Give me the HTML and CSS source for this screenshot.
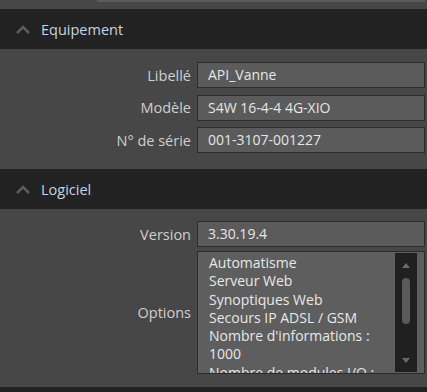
FILE: index.html
```html
<!DOCTYPE html>
<html lang="fr">
<head>
<meta charset="utf-8">
<link rel="stylesheet" href="styles.css">
</head>
<body>
<div class="remnant"><div class="remnant-box"></div></div>

<div class="section-header">
  <svg class="chevron" width="14" height="9" viewBox="0 0 14 9"><path d="M1 8 L7 2 L13 8" fill="none" stroke="#5c5c5c" stroke-width="2.6"/></svg>
  <span class="section-title">Equipement</span>
</div>
<div class="section-body">
  <div class="form-grid">
    <label class="field-label">Libellé</label>
    <div class="field-input">API_Vanne</div>
    <label class="field-label">Modèle</label>
    <div class="field-input">S4W 16-4-4 4G-XIO</div>
    <label class="field-label">N° de série</label>
    <div class="field-input">001-3107-001227</div>
  </div>
</div>

<div class="section-header">
  <svg class="chevron" width="14" height="9" viewBox="0 0 14 9"><path d="M1 8 L7 2 L13 8" fill="none" stroke="#5c5c5c" stroke-width="2.6"/></svg>
  <span class="section-title">Logiciel</span>
</div>
<div class="section-body section-body-2">
  <div class="form-grid form-grid-2">
    <label class="field-label">Version</label>
    <div class="field-input">3.30.19.4</div>
    <label class="field-label">Options</label>
    <div class="field-list">
      <div class="list-text">
        <div>Automatisme</div>
        <div>Serveur Web</div>
        <div>Synoptiques Web</div>
        <div>Secours IP ADSL / GSM</div>
        <div>Nombre d'informations :</div>
        <div>1000</div>
        <div>Nombre de modules I/O :</div>
      </div>
      <div class="scrollbar">
        <svg class="arrow" width="8" height="5" viewBox="0 0 8 5"><path d="M0 5 L4 0 L8 5 Z" fill="#6a6a6a"/></svg>
        <div class="thumb-track"><div class="thumb"></div></div>
        <svg class="arrow" width="8" height="5" viewBox="0 0 8 5"><path d="M0 0 L4 5 L8 0 Z" fill="#6a6a6a"/></svg>
      </div>
    </div>
  </div>
</div>
<div class="section-header footer-stub"></div>
</body>
</html>
```

FILE: styles.css
```css
html, body {
  margin: 0;
  padding: 0;
}
body {
  background: #474747;
  font-family: "Open Sans", "Noto Sans", sans-serif;
  font-size: 14.5px;
  color: #d0d0d0;
  width: 427px;
  height: 392px;
  overflow: hidden;
}
.remnant {
  height: 9px;
  padding-left: 97px;
  padding-right: 2px;
}
.remnant-box {
  height: 2px;
  background: #5b5b5b;
}
.section-header {
  height: 40px;
  background: #222222;
  display: flex;
  align-items: center;
  padding-left: 16px;
  gap: 11px;
}
.chevron {
  display: block;
  margin-top: 1px;
}
.section-title {
  font-size: 14.5px;
  color: #c6d4e2;
}
.section-body {
  padding: 13px 2px 16px 0;
}
.section-body-2 {
  padding: 12px 2px 13px 0;
}
.form-grid {
  display: grid;
  grid-template-columns: 191px 1fr;
  column-gap: 6px;
  row-gap: 6.5px;
  align-items: center;
}
.form-grid-2 {
  row-gap: 4px;
}
.field-label {
  text-align: right;
  color: #cfcfcf;
}
.field-input {
  height: 26px;
  box-sizing: border-box;
  border: 1px solid #2c2c2c;
  background: #5b5b5b;
  color: #e6e6e6;
  padding-left: 10px;
  line-height: 24px;
  font-size: 14px;
}
.field-list {
  height: 123px;
  box-sizing: border-box;
  border: 1px solid #2c2c2c;
  background: #5e5e5e;
  display: flex;
  overflow: hidden;
}
.list-text {
  flex: 1;
  padding: 2px 0 0 11px;
  line-height: 18.3px;
  font-size: 14px;
  color: #e8e8e8;
  overflow: hidden;
  white-space: nowrap;
}
.scrollbar {
  width: 22px;
  margin: 1px 7px 1px 0;
  background: #202020;
  display: flex;
  flex-direction: column;
  align-items: center;
  padding: 10px 0 9px;
  box-sizing: border-box;
}
.arrow {
  display: block;
  flex: none;
}
.thumb-track {
  flex: 1;
  width: 100%;
  display: flex;
  justify-content: center;
  padding-top: 10px;
}
.thumb {
  width: 8px;
  height: 46px;
  border-radius: 4px;
  background: #5a5a5a;
}
.footer-stub {
  height: 10px;
}
```
